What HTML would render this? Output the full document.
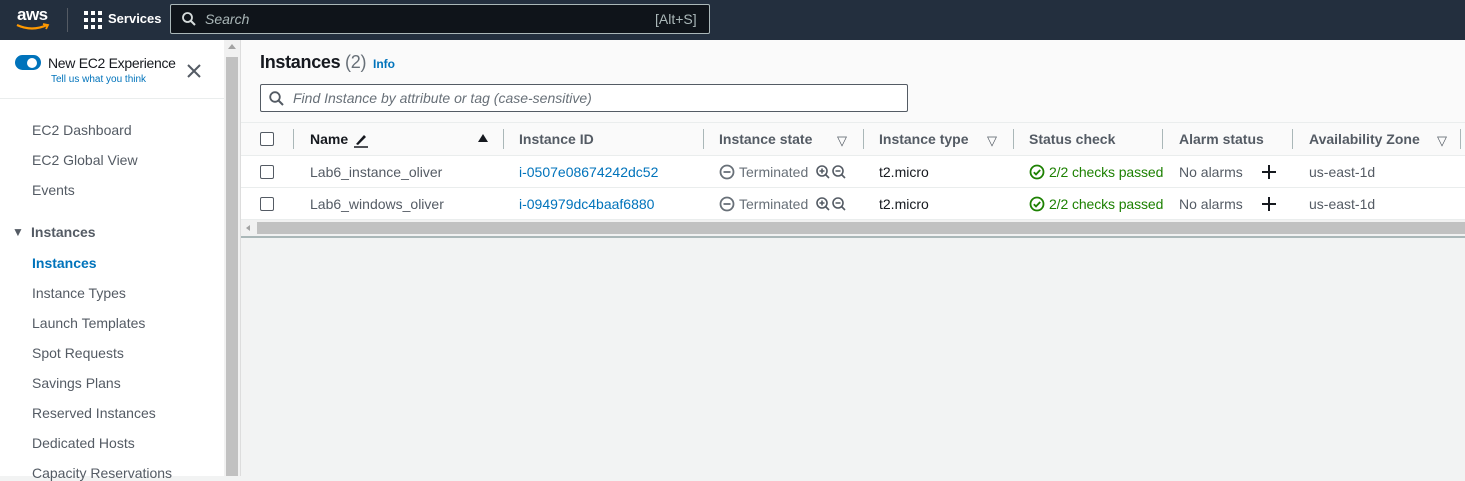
<!DOCTYPE html>
<html><head><style>
*{box-sizing:border-box;margin:0;padding:0}
body{width:1465px;height:476px;overflow:hidden;font-family:"Liberation Sans",sans-serif;font-size:14px;color:#16191f;background:#f2f3f3;position:relative}
.abs{position:absolute}
#top{left:0;top:0;width:1465px;height:40px;background:#232f3e}
#side{left:0;top:40px;width:224px;height:436px;background:#fff}
.nav{position:absolute;left:32px;color:#545b64;font-size:14px;white-space:nowrap}
#vs{left:224px;top:40px;width:17px;height:436px;background:#f1f1f1;border-right:1px solid #ddd}
#main{left:241px;top:40px;width:1224px;height:83px;background:#fafafa}
.th{position:absolute;top:123px;height:33px;background:#fafafa;border-bottom:1px solid #eaeded}
.row{position:absolute;left:241px;width:1224px;height:32px;background:#fff;border-bottom:1px solid #eaeded}
.cb{position:absolute;width:14px;height:14px;border:1.5px solid #545b64;border-radius:2px;background:#fff}
.h{position:absolute;top:131px;font-weight:bold;color:#545b64;white-space:nowrap}
.d{position:absolute;width:1px;height:20px;top:129px;background:#aab7b8}
.c{position:absolute;white-space:nowrap;color:#16191f}
.lnk{color:#0073bb}
.g{color:#1d8102}
.st{color:#687078}
.tri{position:absolute;top:133px;font-size:13px;color:#545b64}
</style></head><body>
<div id="top" class="abs">
 <div class="abs" style="left:17px;top:5px;color:#fff;font-size:17px;font-weight:bold;letter-spacing:-0.5px">aws</div>
 <svg class="abs" style="left:15px;top:22px" width="36" height="10"><path d="M2 3 Q17 10 32 3" stroke="#ff9900" stroke-width="2.2" fill="none"/><path d="M28 2 L33 3 L31 7" stroke="#ff9900" stroke-width="1.8" fill="none"/></svg>
 <div class="abs" style="left:67px;top:8px;width:1px;height:24px;background:#545b64"></div>
 <svg class="abs" style="left:84px;top:11px" width="18" height="18" fill="#fff"><rect x="0" y="0" width="4" height="4"/><rect x="7" y="0" width="4" height="4"/><rect x="14" y="0" width="4" height="4"/><rect x="0" y="7" width="4" height="4"/><rect x="7" y="7" width="4" height="4"/><rect x="14" y="7" width="4" height="4"/><rect x="0" y="14" width="4" height="4"/><rect x="7" y="14" width="4" height="4"/><rect x="14" y="14" width="4" height="4"/></svg>
 <div class="abs" style="left:108px;top:11px;color:#fff;font-size:13px;font-weight:bold">Services</div>
 <div class="abs" style="left:170px;top:4px;width:540px;height:30px;background:#0f141a;border:1px solid #aab7b8;border-radius:2px"></div>
 <svg class="abs" style="left:182px;top:12px" width="14" height="14"><circle cx="5.5" cy="5.5" r="4.5" stroke="#d5dbdb" stroke-width="1.8" fill="none"/><path d="M9 9 L13 13" stroke="#d5dbdb" stroke-width="2"/></svg>
 <div class="abs" style="left:205px;top:11px;color:#aab7b8;font-style:italic;font-size:14px">Search</div>
 <div class="abs" style="left:655px;top:11px;color:#aab7b8;font-size:14px">[Alt+S]</div>
</div>
<div id="side" class="abs">
 <div class="abs" style="left:15px;top:15px;width:26px;height:15px;border-radius:8px;background:#0073bb"></div>
 <div class="abs" style="left:27px;top:18px;width:10px;height:10px;border-radius:5px;background:#fff"></div>
 <div class="abs" style="left:48px;top:15px;font-size:14px;color:#16191f;letter-spacing:-0.3px">New EC2 Experience</div>
 <div class="abs" style="left:51px;top:34px;font-size:10px;color:#0073bb">Tell us what you think</div>
 <svg class="abs" style="left:187px;top:24px" width="14" height="14"><path d="M1 1 L13 13 M13 1 L1 13" stroke="#545b64" stroke-width="2"/></svg>
 <div class="abs" style="left:0;top:58px;width:224px;height:1px;background:#eaeded"></div>
</div>
<div class="nav" style="top:122px">EC2 Dashboard</div>
<div class="nav" style="top:152px">EC2 Global View</div>
<div class="nav" style="top:182px">Events</div>
<div class="nav" style="left:12px;top:225px;font-size:12px;color:#545b64">▼</div>
<div class="nav" style="left:31px;top:224px;font-weight:bold;color:#545b64">Instances</div>
<div class="nav" style="top:255px;font-weight:bold;color:#0073bb">Instances</div>
<div class="nav" style="top:285px">Instance Types</div>
<div class="nav" style="top:315px">Launch Templates</div>
<div class="nav" style="top:345px">Spot Requests</div>
<div class="nav" style="top:375px">Savings Plans</div>
<div class="nav" style="top:405px">Reserved Instances</div>
<div class="nav" style="top:435px">Dedicated Hosts</div>
<div class="nav" style="top:465px">Capacity Reservations</div>
<div id="vs" class="abs"><div class="abs" style="left:2px;top:17px;width:12px;height:419px;background:#c1c1c1"></div><div class="abs" style="left:4px;top:4px;width:0;height:0;border-left:4px solid transparent;border-right:4px solid transparent;border-bottom:5px solid #a3a3a3"></div></div>
<div id="main" class="abs">
 <div class="abs" style="left:19px;top:12px;font-size:18px;font-weight:bold;color:#16191f;letter-spacing:-0.3px">Instances <span style="font-weight:normal;color:#687078">(2)</span></div>
 <div class="abs" style="left:132px;top:17px;font-size:12px;font-weight:bold;color:#0073bb">Info</div>
 <div class="abs" style="left:19px;top:44px;width:648px;height:28px;background:#fff;border:1px solid #545b64;border-radius:2px"></div>
 <svg class="abs" style="left:28px;top:51px" width="15" height="15"><circle cx="6" cy="6" r="4.8" stroke="#545b64" stroke-width="1.8" fill="none"/><path d="M9.5 9.5 L14 14" stroke="#545b64" stroke-width="2"/></svg>
 <div class="abs" style="left:52px;top:50px;font-style:italic;color:#687078">Find Instance by attribute or tag (case-sensitive)</div>
 <div class="abs" style="left:0;top:82px;width:1224px;height:1px;background:#eaeded"></div>
</div>
<div class="th" style="left:241px;width:1224px"></div>
<div class="cb" style="left:260px;top:132px"></div>
<div class="d" style="left:293px"></div>
<div class="h" style="left:310px;color:#16191f">Name</div>
<svg class="abs" style="left:353px;top:132px" width="16" height="16"><path d="M3 12 L11 3 L13 5 L5 13 Z" fill="#16191f"/><path d="M1 15 L15 15" stroke="#16191f" stroke-width="1.5"/></svg>
<div class="abs" style="left:478px;top:134px;width:0;height:0;border-left:5px solid transparent;border-right:5px solid transparent;border-bottom:8px solid #16191f"></div>
<div class="d" style="left:503px"></div>
<div class="h" style="left:519px">Instance ID</div>
<div class="d" style="left:703px"></div>
<div class="h" style="left:719px">Instance state</div><div class="tri" style="left:837px">▽</div>
<div class="d" style="left:863px"></div>
<div class="h" style="left:879px">Instance type</div><div class="tri" style="left:987px">▽</div>
<div class="d" style="left:1013px"></div>
<div class="h" style="left:1029px">Status check</div>
<div class="d" style="left:1162px"></div>
<div class="h" style="left:1179px">Alarm status</div>
<div class="d" style="left:1292px"></div>
<div class="h" style="left:1309px">Availability Zone</div><div class="tri" style="left:1437px">▽</div>
<div class="d" style="left:1460px"></div>

<div class="row" style="top:156px"></div>
<div class="row" style="top:188px"></div>
<div class="cb" style="left:260px;top:165px"></div>
<div class="cb" style="left:260px;top:197px"></div>
<div class="c" style="left:310px;top:164px;color:#545b64">Lab6_instance_oliver</div>
<div class="c" style="left:310px;top:196px;color:#545b64">Lab6_windows_oliver</div>
<div class="c lnk" style="left:519px;top:164px">i-0507e08674242dc52</div>
<div class="c lnk" style="left:519px;top:196px">i-094979dc4baaf6880</div>
<svg class="abs" style="left:719px;top:164px" width="130" height="16"><circle cx="8" cy="8" r="6.5" stroke="#687078" stroke-width="1.8" fill="none"/><path d="M4.5 8 H11.5" stroke="#687078" stroke-width="1.8"/><circle cx="103" cy="7" r="5" stroke="#545b64" stroke-width="1.6" fill="none"/><path d="M106.5 10.5 L110 14 M100.5 7 H105.5 M103 4.5 V9.5" stroke="#545b64" stroke-width="1.6"/><circle cx="119" cy="7" r="5" stroke="#545b64" stroke-width="1.6" fill="none"/><path d="M122.5 10.5 L126 14 M116.5 7 H121.5" stroke="#545b64" stroke-width="1.6"/></svg>
<svg class="abs" style="left:719px;top:196px" width="130" height="16"><circle cx="8" cy="8" r="6.5" stroke="#687078" stroke-width="1.8" fill="none"/><path d="M4.5 8 H11.5" stroke="#687078" stroke-width="1.8"/><circle cx="103" cy="7" r="5" stroke="#545b64" stroke-width="1.6" fill="none"/><path d="M106.5 10.5 L110 14 M100.5 7 H105.5 M103 4.5 V9.5" stroke="#545b64" stroke-width="1.6"/><circle cx="119" cy="7" r="5" stroke="#545b64" stroke-width="1.6" fill="none"/><path d="M122.5 10.5 L126 14 M116.5 7 H121.5" stroke="#545b64" stroke-width="1.6"/></svg>
<div class="c st" style="left:739px;top:164px">Terminated</div>
<div class="c st" style="left:739px;top:196px">Terminated</div>
<div class="c" style="left:879px;top:164px">t2.micro</div>
<div class="c" style="left:879px;top:196px">t2.micro</div>
<svg class="abs" style="left:1029px;top:164px" width="16" height="16"><circle cx="8" cy="8" r="6.5" stroke="#1d8102" stroke-width="1.8" fill="none"/><path d="M4.8 8.2 L7 10.4 L11.2 6" stroke="#1d8102" stroke-width="1.8" fill="none"/></svg>
<svg class="abs" style="left:1029px;top:196px" width="16" height="16"><circle cx="8" cy="8" r="6.5" stroke="#1d8102" stroke-width="1.8" fill="none"/><path d="M4.8 8.2 L7 10.4 L11.2 6" stroke="#1d8102" stroke-width="1.8" fill="none"/></svg>
<div class="c g" style="left:1049px;top:164px;width:115px;overflow:hidden;letter-spacing:-0.1px">2/2 checks passed</div>
<div class="c g" style="left:1049px;top:196px;width:115px;overflow:hidden;letter-spacing:-0.1px">2/2 checks passed</div>
<div class="c" style="left:1179px;top:164px;color:#545b64">No alarms</div>
<div class="c" style="left:1179px;top:196px;color:#545b64">No alarms</div>
<svg class="abs" style="left:1261px;top:164px" width="16" height="16"><path d="M8 1 V15 M1 8 H15" stroke="#16191f" stroke-width="2"/></svg>
<svg class="abs" style="left:1261px;top:196px" width="16" height="16"><path d="M8 1 V15 M1 8 H15" stroke="#16191f" stroke-width="2"/></svg>
<div class="c" style="left:1309px;top:164px;color:#545b64">us-east-1d</div>
<div class="c" style="left:1309px;top:196px;color:#545b64">us-east-1d</div>

<div class="abs" style="left:241px;top:220px;width:1224px;height:16px;background:#f1f1f1"></div>
<div class="abs" style="left:257px;top:222px;width:1208px;height:12px;background:#c1c1c1"></div>
<div class="abs" style="left:246px;top:225px;width:0;height:0;border-top:3px solid transparent;border-bottom:3px solid transparent;border-right:4px solid #a3a3a3"></div>
<div class="abs" style="left:241px;top:236px;width:1224px;height:2px;background:#aab7b8"></div>
</body></html>
